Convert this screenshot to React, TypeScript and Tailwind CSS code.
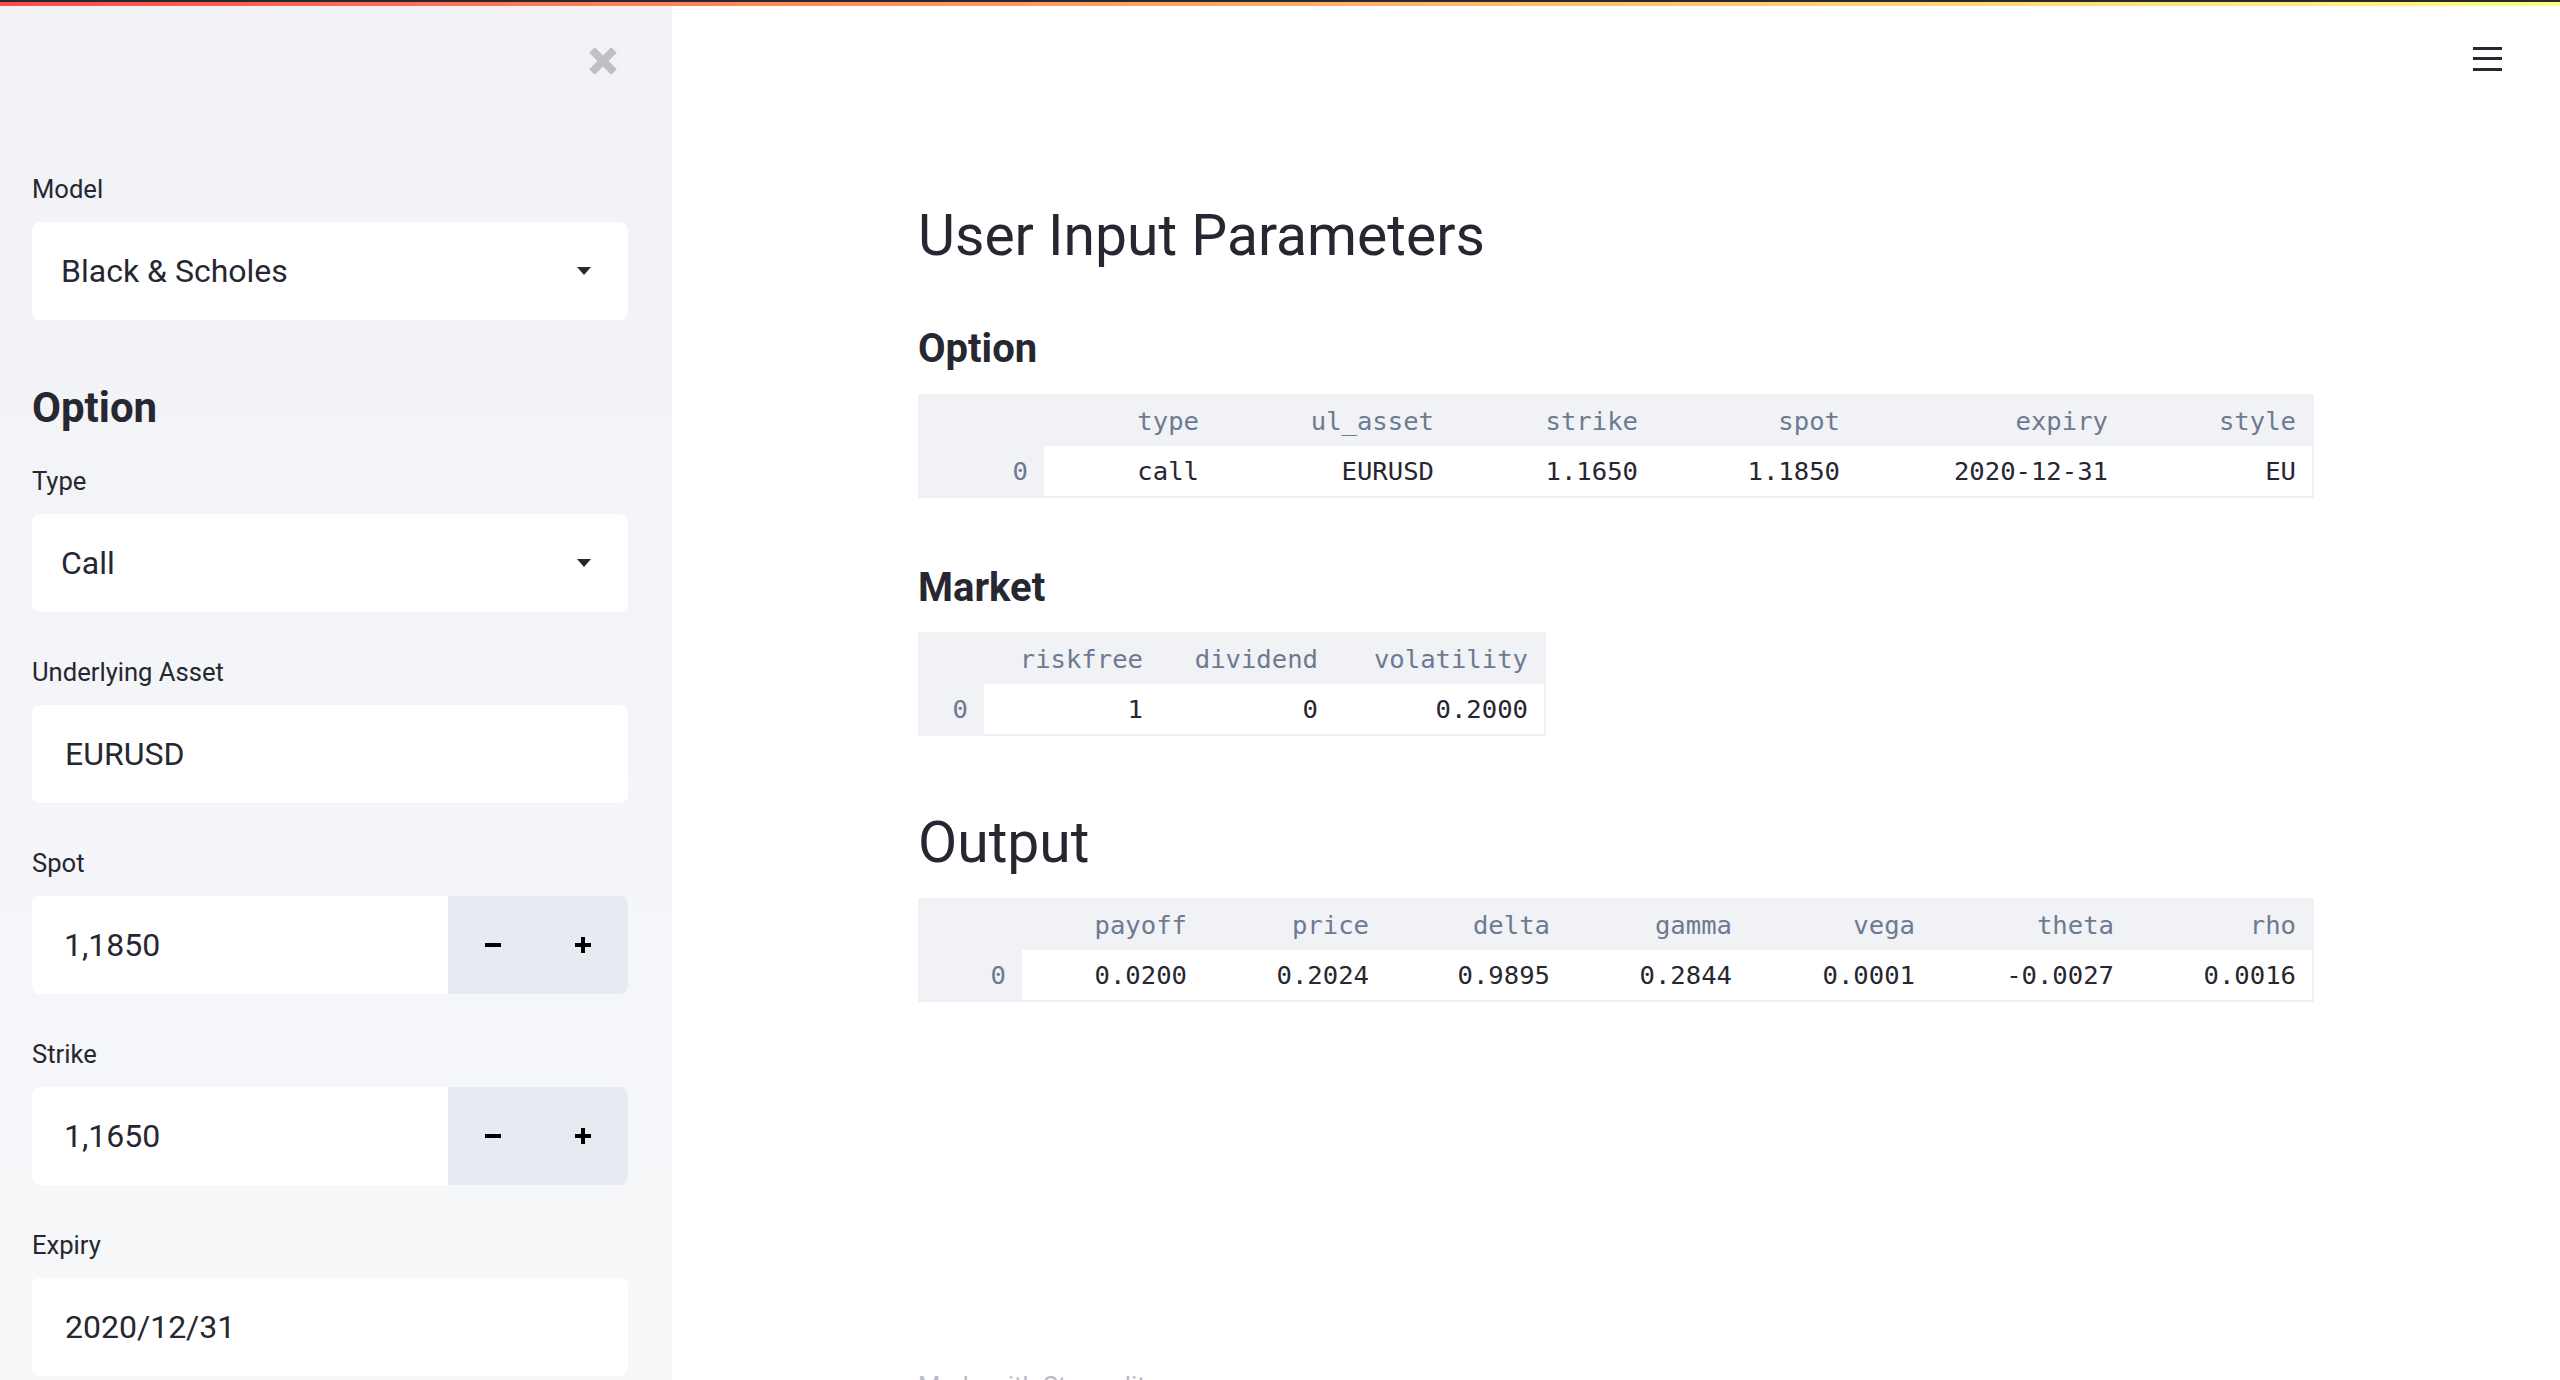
import type { ReactNode } from 'react'

// sidebar widgets
function Label({ children }: { children: ReactNode }) {
  return <div className="text-[25.6px] leading-[32px] mb-[17px] text-[#262730]">{children}</div>
}

function Caret() {
  return (
    <svg width="14" height="8" viewBox="0 0 14 8">
      <path d="M0 0 L14 0 L7 8 Z" fill="#262730" />
    </svg>
  )
}

function SelectBox({ value }: { value: string }) {
  return (
    <div className="h-[98px] bg-white rounded-[8px] flex items-center justify-between pl-[29px] pr-[37px] text-[32px] text-[#262730]">
      <span>{value}</span>
      <Caret />
    </div>
  )
}

function TextBox({ value }: { value: string }) {
  return (
    <div className="h-[98px] bg-white rounded-[8px] flex items-center pl-[33px] text-[32px] text-[#262730]">
      {value}
    </div>
  )
}

function NumberBox({ value }: { value: string }) {
  return (
    <div className="h-[98px] rounded-[8px] overflow-hidden flex">
      <div className="flex-1 bg-white flex items-center pl-[32px] text-[32px] text-[#262730]">{value}</div>
      <div className="w-[180px] bg-[#e6eaf1] flex">
        <button className="w-[90px] flex items-center justify-center">
          <svg width="16" height="16" viewBox="0 0 16 16">
            <rect x="0" y="6" width="16" height="4" fill="#000" />
          </svg>
        </button>
        <button className="w-[90px] flex items-center justify-center">
          <svg width="16" height="16" viewBox="0 0 16 16">
            <rect x="0" y="6" width="16" height="4" fill="#000" />
            <rect x="6" y="0" width="4" height="16" fill="#000" />
          </svg>
        </button>
      </div>
    </div>
  )
}

// dataframe-like tables
function DataTable({
  cols,
  width,
  headers,
  values,
}: {
  cols: string
  width: string
  headers: string[]
  values: string[]
}) {
  return (
    <div className={`${width} border-2 border-[#f0f2f6] font-['DejaVu_Sans_Mono',monospace] text-[25.6px]`}>
      <div className={`grid ${cols}`}>
        <div className="h-[50px] bg-[#f0f2f6]" />
        {headers.map((h) => (
          <div key={h} className="h-[50px] leading-[50px] bg-[#f0f2f6] text-right pr-[16px] text-[#6d7a91]">
            {h}
          </div>
        ))}
        <div className="h-[50px] leading-[50px] bg-[#f0f2f6] text-right pr-[16px] text-[#6d7a91]">0</div>
        {values.map((v, i) => (
          <div key={i} className="h-[50px] leading-[50px] bg-white text-right pr-[16px] text-[#262730]">
            {v}
          </div>
        ))}
      </div>
    </div>
  )
}

export default function App() {
  return (
    <div className="relative flex w-full h-[1380px] overflow-hidden bg-white text-[#262730] font-['Roboto','Liberation_Sans',sans-serif]">
      {/* decoration bar */}
      <div className="absolute top-0 left-0 right-0 z-10">
        <div className="h-[2px] bg-[#262730]" />
        <div className="h-[4px] bg-gradient-to-r from-[#ff4b4b] to-[#fffd80]" />
      </div>

      {/* Sidebar */}
      <aside className="w-[672px] shrink-0 bg-gradient-to-b from-[#f0f2f6] to-[#f7f8fa] pl-[32px] pr-[44px] flex flex-col">
        <div className="h-[122px] flex items-center justify-end pr-[10px]">
          <svg width="30" height="30" viewBox="0 0 30 30">
            <path d="M4 4 L26 26 M26 4 L4 26" stroke="#bfc0c4" strokeWidth="8" />
          </svg>
        </div>

        <div className="mt-[51px]">
          <Label>Model</Label>
          <SelectBox value="Black & Scholes" />
        </div>

        <h3 className="mt-[64px] text-[42px] leading-[48px] font-bold">Option</h3>

        <div className="mt-[33px]">
          <Label>Type</Label>
          <SelectBox value="Call" />
        </div>
        <div className="mt-[44px]">
          <Label>Underlying Asset</Label>
          <TextBox value="EURUSD" />
        </div>
        <div className="mt-[44px]">
          <Label>Spot</Label>
          <NumberBox value="1,1850" />
        </div>
        <div className="mt-[44px]">
          <Label>Strike</Label>
          <NumberBox value="1,1650" />
        </div>
        <div className="mt-[44px]">
          <Label>Expiry</Label>
          <TextBox value="2020/12/31" />
        </div>
      </aside>

      {/* Main */}
      <main className="flex-1 flex flex-col">
        <div className="h-[118px] shrink-0 flex items-center justify-end pr-[58px]">
          <svg width="29" height="25" viewBox="0 0 29 25">
            <rect x="0" y="0" width="29" height="3" fill="#262730" />
            <rect x="0" y="10" width="29" height="3" fill="#262730" />
            <rect x="0" y="21" width="29" height="3" fill="#262730" />
          </svg>
        </div>

        <div className="w-[1396px] mx-auto">
          <h2 className="mt-[84px] text-[57px] leading-[67px] font-normal">User Input Parameters</h2>

          <h3 className="mt-[56px] text-[40px] leading-[48px] font-bold">Option</h3>
          <div className="mt-[21px]">
            <DataTable
              width="w-[1396px]"
              cols="grid-cols-[124px_171px_235px_204px_202px_268px_188px]"
              headers={['type', 'ul_asset', 'strike', 'spot', 'expiry', 'style']}
              values={['call', 'EURUSD', '1.1650', '1.1850', '2020-12-31', 'EU']}
            />
          </div>

          <h3 className="mt-[66px] text-[40px] leading-[48px] font-bold">Market</h3>
          <div className="mt-[20px]">
            <DataTable
              width="w-[628px]"
              cols="grid-cols-[64px_175px_175px_210px]"
              headers={['riskfree', 'dividend', 'volatility']}
              values={['1', '0', '0.2000']}
            />
          </div>

          <h2 className="mt-[73px] text-[57px] leading-[67px] font-normal">Output</h2>
          <div className="mt-[22px]">
            <DataTable
              width="w-[1396px]"
              cols="grid-cols-[102px_181px_182px_181px_182px_183px_199px_182px]"
              headers={['payoff', 'price', 'delta', 'gamma', 'vega', 'theta', 'rho']}
              values={['0.0200', '0.2024', '0.9895', '0.2844', '0.0001', '-0.0027', '0.0016']}
            />
          </div>

          <div className="mt-[368px] text-[25.6px] leading-[32px] text-[#b8b9c4]">Made with Streamlit</div>
        </div>
      </main>
    </div>
  )
}
